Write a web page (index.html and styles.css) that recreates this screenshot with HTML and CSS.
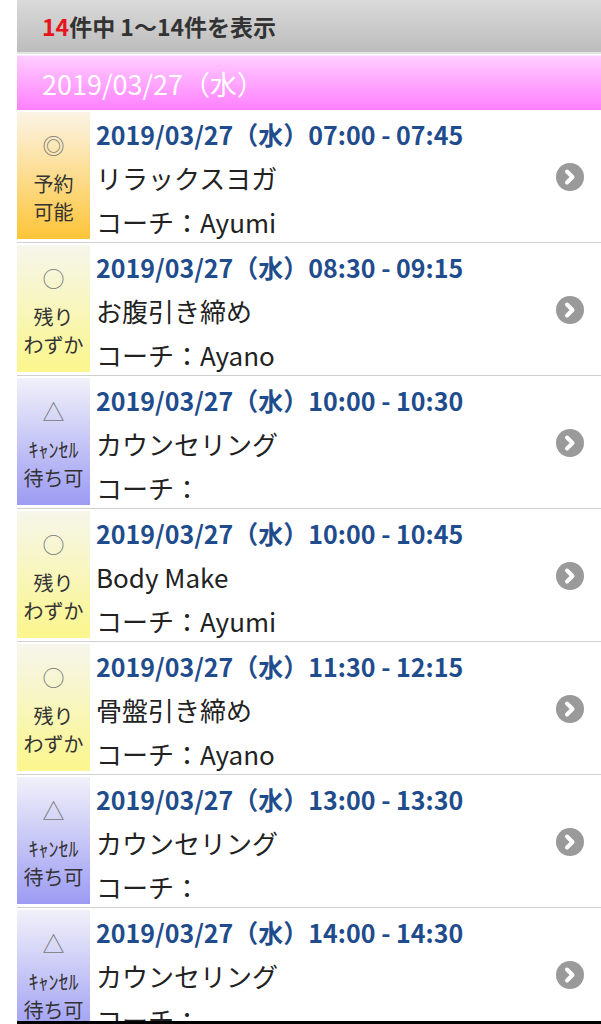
FILE: index.html
```html
<!doctype html>
<html lang="ja">
    <head>
        <meta charset="utf-8">
        <title>レッスン一覧</title>
        <link rel="stylesheet" href="styles.css">
    </head>
    <body>
        <div class="page">
            <div class="count-bar"><span class="count-num">14</span>件中 1〜14件を表示</div>
            <div class="day-bar">2019/03/27（水）</div>

            <ul class="lessons">
                <li class="lesson">
                    <div class="status status-open"><span class="mark">◎</span><span>予約</span><span>可能</span></div>
                    <div class="info">
                        <div class="time">2019/03/27（水）07:00 - 07:45</div>
                        <div class="name">リラックスヨガ</div>
                        <div class="coach">コーチ：Ayumi</div>
                    </div>
                    <svg class="arrow" viewBox="0 0 28 28"><circle cx="14" cy="14" r="14"/><path d="M11 8.5 L16.5 14 L11 19.5"/></svg>
                </li>
                <li class="lesson">
                    <div class="status status-few"><span class="mark">○</span><span>残り</span><span>わずか</span></div>
                    <div class="info">
                        <div class="time">2019/03/27（水）08:30 - 09:15</div>
                        <div class="name">お腹引き締め</div>
                        <div class="coach">コーチ：Ayano</div>
                    </div>
                    <svg class="arrow" viewBox="0 0 28 28"><circle cx="14" cy="14" r="14"/><path d="M11 8.5 L16.5 14 L11 19.5"/></svg>
                </li>
                <li class="lesson">
                    <div class="status status-wait"><span class="mark">△</span><span class="small">ｷｬﾝｾﾙ</span><span>待ち可</span></div>
                    <div class="info">
                        <div class="time">2019/03/27（水）10:00 - 10:30</div>
                        <div class="name">カウンセリング</div>
                        <div class="coach">コーチ：</div>
                    </div>
                    <svg class="arrow" viewBox="0 0 28 28"><circle cx="14" cy="14" r="14"/><path d="M11 8.5 L16.5 14 L11 19.5"/></svg>
                </li>
                <li class="lesson">
                    <div class="status status-few"><span class="mark">○</span><span>残り</span><span>わずか</span></div>
                    <div class="info">
                        <div class="time">2019/03/27（水）10:00 - 10:45</div>
                        <div class="name">Body Make</div>
                        <div class="coach">コーチ：Ayumi</div>
                    </div>
                    <svg class="arrow" viewBox="0 0 28 28"><circle cx="14" cy="14" r="14"/><path d="M11 8.5 L16.5 14 L11 19.5"/></svg>
                </li>
                <li class="lesson">
                    <div class="status status-few"><span class="mark">○</span><span>残り</span><span>わずか</span></div>
                    <div class="info">
                        <div class="time">2019/03/27（水）11:30 - 12:15</div>
                        <div class="name">骨盤引き締め</div>
                        <div class="coach">コーチ：Ayano</div>
                    </div>
                    <svg class="arrow" viewBox="0 0 28 28"><circle cx="14" cy="14" r="14"/><path d="M11 8.5 L16.5 14 L11 19.5"/></svg>
                </li>
                <li class="lesson">
                    <div class="status status-wait"><span class="mark">△</span><span class="small">ｷｬﾝｾﾙ</span><span>待ち可</span></div>
                    <div class="info">
                        <div class="time">2019/03/27（水）13:00 - 13:30</div>
                        <div class="name">カウンセリング</div>
                        <div class="coach">コーチ：</div>
                    </div>
                    <svg class="arrow" viewBox="0 0 28 28"><circle cx="14" cy="14" r="14"/><path d="M11 8.5 L16.5 14 L11 19.5"/></svg>
                </li>
                <li class="lesson">
                    <div class="status status-wait"><span class="mark">△</span><span class="small">ｷｬﾝｾﾙ</span><span>待ち可</span></div>
                    <div class="info">
                        <div class="time">2019/03/27（水）14:00 - 14:30</div>
                        <div class="name">カウンセリング</div>
                        <div class="coach">コーチ：</div>
                    </div>
                    <svg class="arrow" viewBox="0 0 28 28"><circle cx="14" cy="14" r="14"/><path d="M11 8.5 L16.5 14 L11 19.5"/></svg>
                </li>
            </ul>
        </div>

        <div class="bottom-bar"></div>
    </body>
</html>
```

FILE: styles.css
```css
body {
    margin: 0;
    padding-left: 17px;
    background: #fff;
    font-family: "Noto Sans CJK JP", "Noto Sans", sans-serif;
    color: #222;
}

.count-bar {
    height: 52px;
    padding-left: 25px;
    display: flex;
    align-items: center;
    background: linear-gradient(#dadada, #bdbdbd);
    border-bottom: 2px solid #e4e4e4;
    font-size: 23px;
    font-weight: bold;
    color: #333;
}

.count-num {
    color: #e8141b;
}

.day-bar {
    height: 55px;
    margin-top: 1px;
    padding-left: 25px;
    display: flex;
    align-items: center;
    background: linear-gradient(#ffcdff, #ff80ff);
    border-top: 1px solid #ffe4ff;
    box-sizing: border-box;
    font-size: 27px;
    color: #fff;
}

.lessons {
    list-style: none;
    margin: 0;
    padding: 0;
}

.lesson {
    height: 133px;
    box-sizing: border-box;
    padding-top: 2px;
    display: flex;
    align-items: flex-start;
    border-bottom: 1px solid #cfcfcf;
}

.status {
    width: 73px;
    height: 127px;
    flex-shrink: 0;
    box-sizing: border-box;
    padding-top: 18px;
    display: flex;
    flex-direction: column;
    align-items: center;
    font-size: 20px;
    line-height: 28px;
    color: #333;
}

.status .mark {
    color: #777;
    font-size: 22px;
    margin-bottom: 12px;
}

.status .small {
    font-size: 20px;
}

.status-open {
    background: linear-gradient(#fbf4e6, #fdc437);
}

.status-few {
    background: linear-gradient(#f6f6ec, #fbf68c);
}

.status-wait {
    background: linear-gradient(#f1f1fa, #9c9bf3);
}

.info {
    flex: 1;
    padding-left: 6px;
    line-height: 44px;
    font-size: 26px;
    white-space: nowrap;
}

.time {
    font-size: 25px;
    font-weight: bold;
    color: #1f4c8c;
}

.arrow {
    width: 28px;
    height: 28px;
    align-self: center;
    margin-right: 17px;
    flex-shrink: 0;
}

.arrow circle {
    fill: #9a9a9a;
}

.arrow path {
    fill: none;
    stroke: #fff;
    stroke-width: 4;
    stroke-linecap: round;
    stroke-linejoin: round;
}

.bottom-bar {
    position: fixed;
    left: 17px;
    right: 0;
    bottom: 0;
    height: 3px;
    background: #000;
}
```
